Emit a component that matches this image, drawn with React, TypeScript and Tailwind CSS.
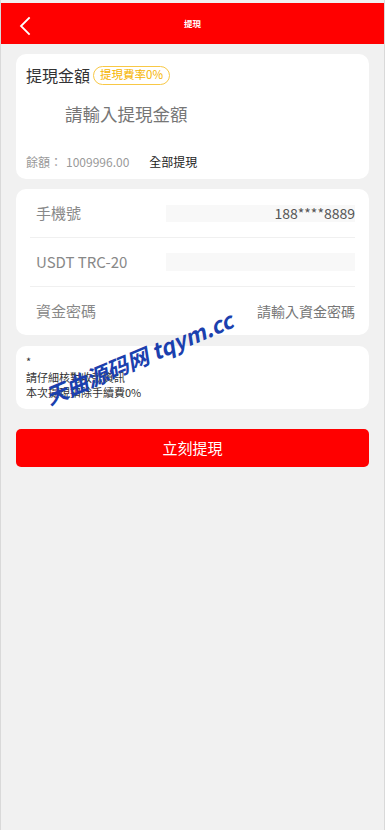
import React from "react";

const font = { fontFamily: '"Noto Sans CJK TC", "Noto Sans", Roboto, sans-serif' };

export default function App() {
  return (
    <div
      className="relative min-h-[830px] w-[385px] border-x border-[#d9d9d9] bg-[#f1f1f1] pt-[3px]"
      style={font}
    >
      {/* Header */}
      <div className="relative flex h-[41px] items-center justify-center bg-[#ff0000]">
        <svg
          className="absolute left-[17px] top-[13px]"
          width="14"
          height="20"
          viewBox="0 0 14 20"
          fill="none"
        >
          <polyline points="11,2 3,10 11,18" stroke="#ffffff" strokeWidth="1.8" strokeLinecap="square" />
        </svg>
        <span className="text-[8.5px] font-bold leading-none text-white">提現</span>
      </div>

      <div className="px-[15px]">
        {/* Card 1 */}
        <div className="mt-[10px] flex h-[125px] flex-col rounded-[10px] bg-white px-[10px]">
          <div className="flex items-center pt-[10px]">
            <span className="text-[16px] leading-[22px] text-[#333]">提現金額</span>
            <span className="ml-[3px] flex h-[19px] items-center rounded-full border border-[#f8c845] px-[6px] text-[11.5px] leading-none text-[#f6b400]">
              提現費率0%
            </span>
          </div>
          <div className="mt-[8px] flex h-[40px] items-center pl-[39px]">
            <input
              className="w-full bg-transparent text-[17.5px] text-[#333] outline-none placeholder:text-[#767676]"
              placeholder="請輸入提現金額"
              style={font}
            />
          </div>
          <div className="mt-[20px] flex h-[16px] items-center text-[12px] leading-[16px]">
            <span className="text-[#999]">餘額：</span>
            <span className="ml-[4px] text-[#999]">1009996.00</span>
            <span className="ml-[20px] text-[#222]">全部提現</span>
          </div>
        </div>

        {/* Card 2 */}
        <div className="mt-[10px] flex h-[146px] flex-col rounded-[10px] bg-white px-[14px]">
          <div className="flex h-[49px] items-center border-b border-[#f0f0f0] pl-[6px]">
            <span className="w-[130px] text-[15px] text-[#888]">手機號</span>
            <div className="flex h-[17px] flex-1 items-center justify-end bg-[#f8f8f8] text-[14px] leading-none text-[#555]">
              188****8889
            </div>
          </div>
          <div className="flex h-[49px] items-center border-b border-[#f0f0f0] pl-[6px]">
            <span className="w-[130px] text-[15px] text-[#888]">USDT TRC-20</span>
            <div className="h-[18px] flex-1 bg-[#f8f8f8]" />
          </div>
          <div className="flex h-[48px] items-center pl-[6px]">
            <span className="w-[130px] text-[15px] text-[#888]">資金密碼</span>
            <div className="flex flex-1 justify-end text-[14px] text-[#777]">請輸入資金密碼</div>
          </div>
        </div>

        {/* Card 3 */}
        <div className="mt-[11px] h-[63px] rounded-[10px] bg-white px-[10px] pt-[8px] text-[11px] leading-[15.5px] text-[#333]">
          <div>*</div>
          <div>請仔細核對收款資訊</div>
          <div>本次提現扣除手續費0%</div>
        </div>

        {/* Button */}
        <button
          className="mt-[20px] flex h-[38px] w-full items-center justify-center rounded-[5px] bg-[#ff0000] text-[15px] text-white"
          style={font}
        >
          立刻提現
        </button>
      </div>

      {/* Watermark */}
      <div className="pointer-events-none absolute left-[30px] top-[342px] w-[215px] -rotate-[23deg] text-center">
        <span
          className="text-[22px] font-bold italic leading-[30px] text-[#1b40ae]"
          style={{ fontFamily: '"Noto Sans CJK SC", "Noto Sans", sans-serif' }}
        >
          天曲源码网 tqym.cc
        </span>
      </div>
    </div>
  );
}
